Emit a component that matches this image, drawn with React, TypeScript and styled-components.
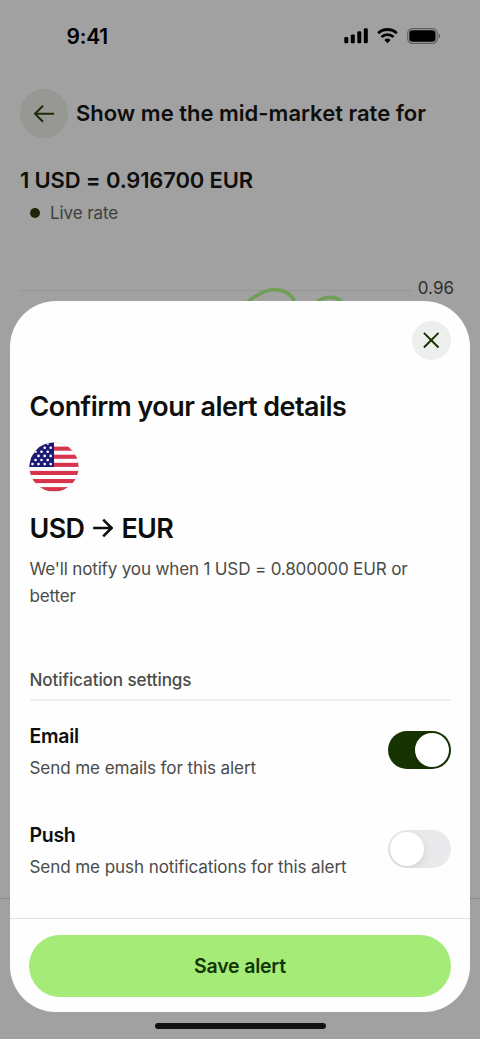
import React, { useState } from 'react';
import styled, { createGlobalStyle } from 'styled-components';

const GlobalStyle = createGlobalStyle`
  * { box-sizing: border-box; }
  body { margin: 0; background: #a1a1a1; font-family: Inter, "Liberation Sans", sans-serif; }
  button { font: inherit; border: 0; padding: 0; cursor: pointer; }
  h1, h2, h3, p { margin: 0; }
`;

const Screen = styled.div`
  position: relative;
  width: 480px;
  height: 1039px;
  overflow: hidden;
  background: #a1a1a1;
  color: #0e0f0c;
  display: flex;
  flex-direction: column;
`;

const StatusBar = styled.div`
  height: 72px;
  padding: 0 39px 0 66.5px;
  display: flex;
  align-items: center;
  justify-content: space-between;
`;

const Time = styled.span`
  font-size: 21px;
  font-weight: 600;
  letter-spacing: -0.2px;
  color: #000;
`;

const StatusIcons = styled.div`
  display: flex;
  align-items: center;
  gap: 9px;
  svg { display: block; }
`;

const Header = styled.header`
  display: flex;
  align-items: center;
  gap: 8px;
  padding: 17px 20px 0;
`;

const BackButton = styled.button`
  width: 48px;
  height: 49px;
  border-radius: 50%;
  background: #979894;
  display: flex;
  align-items: center;
  justify-content: center;
`;

const PageTitle = styled.h1`
  padding-bottom: 2px;
  font-size: 22px;
  line-height: 30px;
  font-weight: 600;
  letter-spacing: 0;
  white-space: nowrap;
`;

const Rate = styled.h2`
  padding: 27px 20px 0;
  font-size: 22px;
  line-height: 30px;
  font-weight: 600;
  letter-spacing: -0.15px;
  white-space: nowrap;
`;

const LiveRate = styled.div`
  padding: 5px 30px 0;
  display: flex;
  align-items: center;
  gap: 10px;
  font-size: 17px;
  line-height: 26px;
  letter-spacing: -0.08px;
  color: #3d3f3c;
`;

const LiveDot = styled.span`
  width: 10px;
  height: 10px;
  border-radius: 50%;
  background: #1e2609;
`;

const ChartArea = styled.div`
  margin-top: 50px;
  padding: 0 26px 0 20px;
  display: flex;
  align-items: flex-start;
  justify-content: space-between;
  font-size: 17px;
  line-height: 24px;
  color: #2f312e;
  svg { display: block; }
`;

const PageFooter = styled.div`
  margin-top: auto;
  height: 141px;
  border-top: 1px solid #8b8b8b;
`;

const Sheet = styled.section`
  position: absolute;
  left: 10px;
  right: 10px;
  top: 301px;
  height: 711px;
  border-radius: 46px;
  background: #fefefe;
  display: flex;
  flex-direction: column;
  overflow: hidden;
`;

const SheetTop = styled.div`
  display: flex;
  justify-content: flex-end;
  padding: 20px 19px 0;
`;

const CloseButton = styled.button`
  width: 39px;
  height: 39px;
  padding: 0 1px 1px 0;
  border-radius: 50%;
  background: #edefec;
  display: flex;
  align-items: center;
  justify-content: center;
`;

const SheetBody = styled.div`
  flex: 1;
  padding: 29px 19.3px 0 19.5px;
`;

const SheetTitle = styled.h2`
  font-size: 26.9px;
  line-height: 34px;
  font-weight: 600;
  letter-spacing: -0.52px;
  white-space: nowrap;
`;

const FlagIcon = styled.svg`
  display: block;
  width: 50px;
  height: 50px;
  margin: 19px 0 0 -1px;
`;

const Pair = styled.h3`
  margin-top: 19px;
  font-size: 26.9px;
  line-height: 34px;
  font-weight: 600;
  letter-spacing: -0.6px;
  display: flex;
  align-items: center;
  gap: 8px;
`;

const Copy = styled.p`
  font-size: 17.1px;
  line-height: 27px;
  letter-spacing: -0.11px;
  color: #4a4c4a;
`;

const PairCopy = styled(Copy)`
  margin-top: 10px;
  letter-spacing: -0.19px;
`;

const SectionLabel = styled.h3`
  margin: 58px 0 -1px;
  padding-bottom: 6px;
  border-bottom: 2px solid #edeeed;
  font-size: 17.1px;
  line-height: 26px;
  font-weight: 500;
  letter-spacing: -0.1px;
  color: #4a4c4a;
`;

const Setting = styled.div`
  display: flex;
  align-items: center;
  justify-content: space-between;
  height: 99px;
`;

const SettingText = styled.div`
  padding-top: 4px;
`;

const SettingName = styled.h3`
  font-size: 19.5px;
  line-height: 28px;
  font-weight: 600;
  letter-spacing: -0.3px;
  margin-bottom: 4px;
`;

const Track = styled.button<{ $on: boolean }>`
  width: 62.5px;
  height: 38px;
  padding: 2px;
  border-radius: 19px;
  background: ${(p) => (p.$on ? '#163300' : '#e9e9eb')};
  display: flex;
  align-items: center;
  justify-content: ${(p) => (p.$on ? 'flex-end' : 'flex-start')};
  overflow: hidden;
`;

const Knob = styled.span`
  width: 34px;
  height: 34px;
  border-radius: 50%;
  background: #fff;
  box-shadow: 0 3px 8px rgba(0, 0, 0, 0.1);
`;

const SheetFooter = styled.footer`
  height: 94px;
  padding: 15.5px 19px 0;
  border-top: 1px solid #dfe0df;
`;

const SaveButton = styled.button`
  display: block;
  width: 100%;
  height: 62.8px;
  border-radius: 32px;
  background: #a4eb77;
  color: #123605;
  && {
    font-size: 19.5px;
    font-weight: 600;
    letter-spacing: -0.2px;
  }
`;

const HomeIndicator = styled.div`
  position: absolute;
  left: 155px;
  bottom: 10px;
  width: 171px;
  height: 6px;
  border-radius: 3px;
  background: #111;
`;

const SignalIcon = () => (
  <svg width="24" height="16" viewBox="0 0 24 16">
    <rect x="0.3" y="9" width="4" height="6.2" rx="1.2" />
    <rect x="6.8" y="6.4" width="4" height="8.8" rx="1.2" />
    <rect x="13.3" y="3.2" width="4" height="12" rx="1.2" />
    <rect x="19.8" y="0.2" width="4" height="15" rx="1.2" />
  </svg>
);

const WifiIcon = () => (
  <svg width="21" height="16" viewBox="0 0 21 16">
    <g fill="none" stroke="#000" strokeWidth="2.8">
      <path d="M1.2 5.2a13.6 13.6 0 0 1 18.6 0" />
      <path d="M4.5 9a8.7 8.7 0 0 1 12 0" />
    </g>
    <path d="M7.3 11.9a5 5 0 0 1 6.4 0L10.5 15.3Z" />
  </svg>
);

const BatteryIcon = () => (
  <svg width="34" height="16" viewBox="0 0 34 16">
    <rect x="0.7" y="0.6" width="29.6" height="14.8" rx="4.8" fill="none" stroke="#000" strokeOpacity="0.4" strokeWidth="1.2" />
    <rect x="2.3" y="2.3" width="26.2" height="11.4" rx="3.2" />
    <path d="M31.7 5.4v5.2c1.9-.8 1.9-4.4 0-5.2Z" opacity="0.45" />
  </svg>
);

const BackArrow = () => (
  <svg width="22" height="20" viewBox="0 0 22 20" fill="none" stroke="#1e2c0a" strokeWidth="2">
    <path d="M21 9.8H2M10 1.8 2 9.8l8 8" />
  </svg>
);

const CloseIcon = () => (
  <svg width="18" height="18" viewBox="0 0 18 18" fill="none" stroke="#163300" strokeWidth="2">
    <path d="M1.9 1.9l14.6 14.6M16.5 1.9L1.9 16.5" />
  </svg>
);

const PairArrow = () => (
  <svg width="21" height="20" viewBox="0 0 21 20" fill="none" stroke="#0e0f0c" strokeWidth="2.6">
    <path d="M1.2 10h18.2M11.2 1.6 19.6 10l-8.4 8.4" />
  </svg>
);

const ChartLine = () => (
  <svg width="392" height="25" viewBox="0 0 392 25">
    <path d="M0 14.5h392" stroke="#959595" />
    <g fill="none" stroke="#6f9f56" strokeWidth="3.5">
      <path d="M227 27c4-4.500 9-7.500 14-9.700 4-2.300 7-3.600 13-3.600 11 0 18 4.300 21 13.300" />
      <path d="M296 27c5-6 19-9 27 0" />
    </g>
  </svg>
);

const starRows = [
  [12.5, 18.7],
  [15.7, 21.7],
  [6.5, 12.5, 18.7],
  [9.5, 15.7, 21.7],
  [6.5, 12.5, 18.7],
  [3.5, 9.5, 15.7, 21.7],
];

const Flag = () => (
  <FlagIcon viewBox="0 0 50 50">
    <defs>
      <clipPath id="flag-circle">
        <circle cx="25" cy="25" r="24.5" />
      </clipPath>
    </defs>
    <g clipPath="url(#flag-circle)">
      <rect width="50" height="50" fill="#fff" />
      {[4.6, 12.7, 20.8, 28.9, 37, 45.1].map((y) => (
        <rect key={y} y={y} width="50" height="4.1" fill="#d8344d" />
      ))}
      <rect width="25" height="25" fill="#1b1a75" />
      {starRows.map((row, r) =>
        row.map((x) => <circle key={`${r}-${x}`} cx={x} cy={1.6 + r * 4.1} r="1.3" fill="#fff" />)
      )}
    </g>
    <circle cx="25" cy="25" r="24.5" fill="none" stroke="#000" strokeOpacity="0.12" strokeWidth="0.7" />
  </FlagIcon>
);

interface SettingRowProps {
  name: string;
  detail: string;
  initial: boolean;
}

const SettingRow = ({ name, detail, initial }: SettingRowProps) => {
  const [on, setOn] = useState(initial);
  return (
    <Setting>
      <SettingText>
        <SettingName>{name}</SettingName>
        <Copy>{detail}</Copy>
      </SettingText>
      <Track $on={on} role="switch" aria-checked={on} aria-label={name} onClick={() => setOn(!on)}>
        <Knob />
      </Track>
    </Setting>
  );
};

export default function App() {
  return (
    <>
      <GlobalStyle />
      <Screen>
        <StatusBar>
          <Time>9:41</Time>
          <StatusIcons>
            <SignalIcon />
            <WifiIcon />
            <BatteryIcon />
          </StatusIcons>
        </StatusBar>
        <Header>
          <BackButton aria-label="Back">
            <BackArrow />
          </BackButton>
          <PageTitle>Show me the mid-market rate for</PageTitle>
        </Header>
        <Rate>1 USD = 0.916700 EUR</Rate>
        <LiveRate>
          <LiveDot />
          Live rate
        </LiveRate>
        <ChartArea>
          <ChartLine />
          <span>0.96</span>
        </ChartArea>
        <PageFooter />
        <Sheet role="dialog" aria-label="Confirm your alert details">
          <SheetTop>
            <CloseButton aria-label="Close">
              <CloseIcon />
            </CloseButton>
          </SheetTop>
          <SheetBody>
            <SheetTitle>Confirm your alert details</SheetTitle>
            <Flag />
            <Pair>
              USD
              <PairArrow />
              EUR
            </Pair>
            <PairCopy>We'll notify you when 1 USD = 0.800000 EUR or better</PairCopy>
            <SectionLabel>Notification settings</SectionLabel>
            <SettingRow name="Email" detail="Send me emails for this alert" initial />
            <SettingRow name="Push" detail="Send me push notifications for this alert" initial={false} />
          </SheetBody>
          <SheetFooter>
            <SaveButton>Save alert</SaveButton>
          </SheetFooter>
        </Sheet>
        <HomeIndicator />
      </Screen>
    </>
  );
}
